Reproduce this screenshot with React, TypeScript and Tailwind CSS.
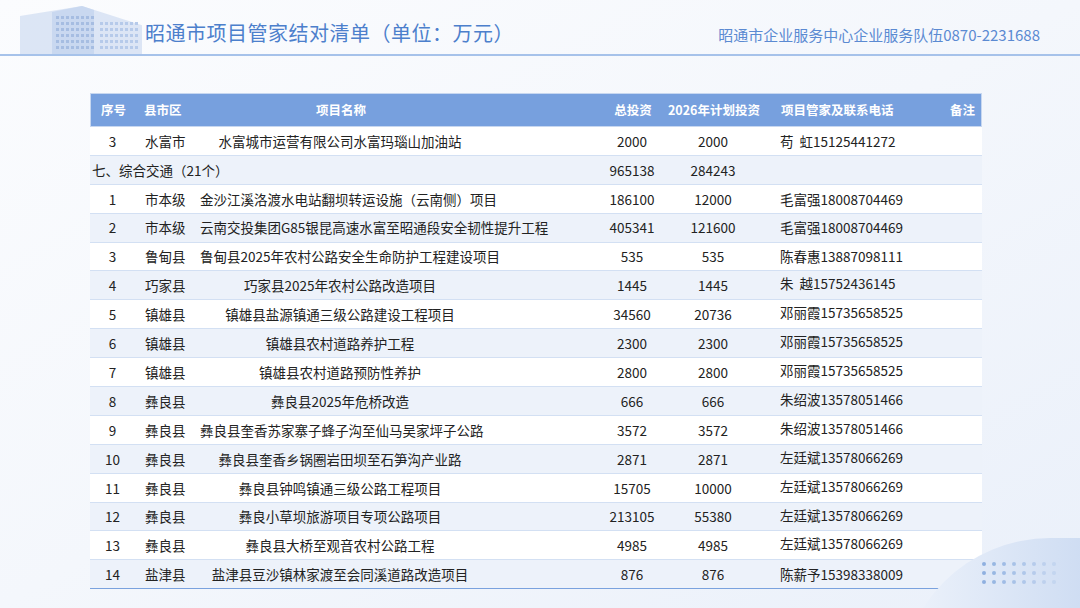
const rows: (string[] | string)[] = [
  ["3","水富市","水富城市运营有限公司水富玛瑙山加油站","2000","2000","苟  虹15125441272"],
  "七、综合交通（21个）",
  ["1","市本级","金沙江溪洛渡水电站翻坝转运设施（云南侧）项目","186100","12000","毛富强18008704469"],
  ["2","市本级","云南交投集团G85银昆高速水富至昭通段安全韧性提升工程","405341","121600","毛富强18008704469"],
  ["3","鲁甸县","鲁甸县2025年农村公路安全生命防护工程建设项目","535","535","陈春惠13887098111"],
  ["4","巧家县","巧家县2025年农村公路改造项目","1445","1445","朱  越15752436145"],
  ["5","镇雄县","镇雄县盐源镇通三级公路建设工程项目","34560","20736","邓丽霞15735658525"],
  ["6","镇雄县","镇雄县农村道路养护工程","2300","2300","邓丽霞15735658525"],
  ["7","镇雄县","镇雄县农村道路预防性养护","2800","2800","邓丽霞15735658525"],
  ["8","彝良县","彝良县2025年危桥改造","666","666","朱绍波13578051466"],
  ["9","彝良县","彝良县奎香苏家寨子蜂子沟至仙马吴家坪子公路","3572","3572","朱绍波13578051466"],
  ["10","彝良县","彝良县奎香乡锅圈岩田坝至石笋沟产业路","2871","2871","左廷斌13578066269"],
  ["11","彝良县","彝良县钟鸣镇通三级公路工程项目","15705","10000","左廷斌13578066269"],
  ["12","彝良县","彝良小草坝旅游项目专项公路项目","213105","55380","左廷斌13578066269"],
  ["13","彝良县","彝良县大桥至观音农村公路工程","4985","4985","左廷斌13578066269"],
  ["14","盐津县","盐津县豆沙镇林家渡至会同溪道路改造项目","876","876","陈薪予15398338009"],
];
const f = { fontFamily: '"Noto Sans CJK SC", "Noto Sans", sans-serif' };
export default function App() {
  return (
    <div className="relative w-[1080px] h-[608px] overflow-hidden bg-gradient-to-br from-[#fbfcfe] via-[#f4f7fc] to-[#eaf0fa]" style={f}>
      <div className="absolute right-[-60px] bottom-[-80px] w-[240px] h-[150px] rounded-tl-[200px] bg-gradient-to-r from-[#eef3fb] to-[#c5d6f0]" />
      <div className="absolute left-[982px] top-[562px] grid grid-cols-8 gap-x-[6px] gap-y-[5px]">
        {Array.from({ length: 24 }).map((_, i) => (
          <div key={i} className="w-[4px] h-[4px] rounded-full bg-[#8fb0e0]" style={{ opacity: 1 - (i % 8) * 0.11 }} />
        ))}
      </div>
      <div className="relative h-[56px] border-b-2 border-[#a6c2ea] flex items-end">
        <svg width="130" height="52" viewBox="0 0 130 52" className="ml-[12px] opacity-60">
          <polygon points="8,14 70,4 132,24 132,52 8,52" fill="#c9d8f0" />
          <polygon points="40,10 70,4 82,8 82,52 40,52" fill="#a9c1e8" />
          {Array.from({ length: 6 }).map((_, r) =>
            Array.from({ length: 8 }).map((_, c) => (
              <rect key={r + "-" + c} x={44 + c * 5} y={14 + r * 6} width="3" height="3" fill="#6f94d0" />
            ))
          )}
          {Array.from({ length: 5 }).map((_, r) =>
            Array.from({ length: 8 }).map((_, c) => (
              <rect key={"b" + r + "-" + c} x={88 + c * 5} y={20 + r * 6} width="3" height="3" fill="#8aaade" />
            ))
          )}
        </svg>
        <div className="text-[20px] text-[#4c7fcc] mb-[6px] ml-[3px] tracking-[0.5px]">昭通市项目管家结对清单（单位：万元）</div>
        <div className="ml-auto mr-[40px] mb-[8px] text-[15px] text-[#5b8ad2]">昭通市企业服务中心企业服务队伍0870-2231688</div>
      </div>
      <div className="ml-[90px] mt-[37px] w-[892px] text-[13.5px] text-[#222]">
        <div className="flex h-[34px] items-center bg-[#77a0de] text-white font-bold text-[12.5px] border border-[#c7d7f0] whitespace-nowrap">
          <div className="w-[45px] text-center">序号</div>
          <div className="w-[65px] pl-[8px]">县市区</div>
          <div className="w-[400px] pr-[120px] text-center">项目名称</div>
          <div className="w-[64px] text-center">总投资</div>
          <div className="w-[98px] text-center">2026年计划投资</div>
          <div className="w-[170px] pl-[18px]">项目管家及联系电话</div>
          <div className="flex-1 text-right pr-[6px]">备注</div>
        </div>
        {rows.map((r, i) => (
          <div key={i} className={"flex h-[28.9px] items-center border-b border-[#d3e0f3] whitespace-nowrap " + (i % 2 === 0 ? "bg-white" : "bg-[#edf2fa]")}>
            {typeof r === "string" ? (
              <>
                <div className="w-[510px] pl-[2px]">{r}</div>
                <div className="w-[64px] text-center">965138</div>
                <div className="w-[98px] text-center">284243</div>
              </>
            ) : (
              <>
                <div className="w-[45px] text-center">{r[0]}</div>
                <div className="w-[65px] pl-[10px]">{r[1]}</div>
                <div className="w-[400px] pr-[120px] text-center">{r[2]}</div>
                <div className="w-[64px] text-center">{r[3]}</div>
                <div className="w-[98px] text-center">{r[4]}</div>
                <div className={"w-[170px] pl-[18px] whitespace-pre " + (i >= 5 && i <= 14 ? "self-start pt-[2px]" : "")}>{r[5]}</div>
              </>
            )}
          </div>
        ))}
        <div className="border-t border-[#7aa2de] -mt-px" />
      </div>
    </div>
  );
}
